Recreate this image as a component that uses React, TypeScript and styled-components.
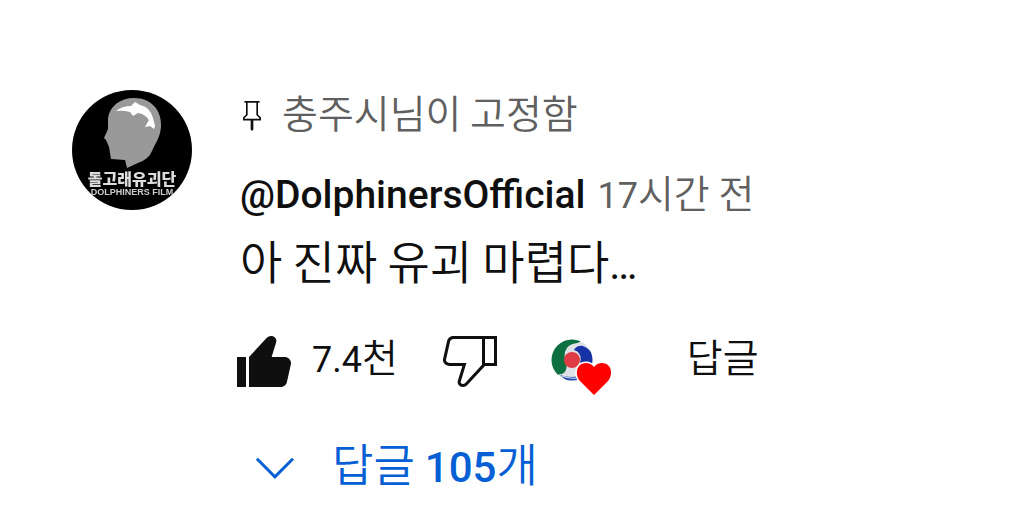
import React from "react";
import styled, { createGlobalStyle } from "styled-components";

const GlobalStyle = createGlobalStyle`
  body {
    margin: 0;
    background: #ffffff;
    color: #0f0f0f;
    font-family: Roboto, "Noto Sans CJK KR", sans-serif;
  }
`;

const Comment = styled.article`
  display: flex;
  align-items: flex-start;
  gap: 48px;
  padding: 90px 48px 24px 72px;
`;

const AvatarLink = styled.a`
  flex: none;
  display: block;
  width: 120px;
  height: 120px;
  border-radius: 50%;
  overflow: hidden;
`;

const Main = styled.div`
  flex: 1;
  min-width: 0;
`;

const Pinned = styled.div`
  display: flex;
  align-items: center;
  gap: 12px;
  height: 51px;
  margin-left: -6px;
  color: #606060;
`;

const Label = styled.span`
  font-size: 36px;
  line-height: 48px;
  white-space: nowrap;
`;

const Header = styled.div`
  display: flex;
  align-items: baseline;
  gap: 12px;
  margin-top: 26px;
  line-height: 56px;
  white-space: nowrap;
`;

const Author = styled.a`
  color: #0f0f0f;
  font-size: 39px;
  font-weight: 500;
  text-decoration: none;
`;

const Time = styled.a`
  color: #606060;
  font-size: 36px;
  text-decoration: none;
`;

const Hangul = styled.span<{ $size: number }>`
  font-family: "Noto Sans CJK KR", sans-serif;
  font-size: ${(p) => p.$size}px;
  font-weight: 350;
  line-height: 1;
`;

const Body = styled.p`
  margin: 9px 0 0;
  font-size: 42px;
  line-height: 64px;
`;

const Toolbar = styled.div`
  display: flex;
  align-items: center;
  height: 72px;
  margin: 27px 0 0 -12px;
`;

const Button = styled.button<{ $color?: string }>`
  display: flex;
  align-items: center;
  padding: 0;
  border: 0;
  background: none;
  color: ${(p) => p.$color ?? "#0f0f0f"};
  font-family: inherit;
  cursor: pointer;
`;

const LikeButton = styled(Button)`
  gap: 12px;
  margin-right: 36px;
`;

const HeartButton = styled(Button)`
  margin: 16px 73px 0 44px;
`;

const RepliesButton = styled(Button)`
  gap: 20px;
  margin-top: 36px;
  font-size: 42px;
  font-weight: 500;
  line-height: 72px;
  white-space: nowrap;
`;

const Icon = styled.svg<{ $size: number }>`
  flex: none;
  display: block;
  width: ${(p) => p.$size}px;
  height: ${(p) => p.$size}px;
  fill: currentColor;
`;

function Avatar() {
  return (
    <svg width="120" height="120" viewBox="0 0 120 120" role="img" aria-label="DolphinersOfficial">
      <defs>
        <filter id="soft"><feGaussianBlur stdDeviation="0.7" /></filter>
      </defs>
      <rect width="120" height="120" fill="#000" />
      <g filter="url(#soft)">
        <path d="M62 8C80 8 90 21 89 37C88 48 83 54 80 61Q77 69 66 73L55 78L53 70L39 69L37 57L34 50L32 48L36 39L36 28C38 16 48 8 62 8Z" fill="#999" />
        <path d="M44 21Q50 16 59 16L63 12L68 15Q78 17 81 28L83 36L82 39L78 36L73 37L77 30Q73 24 66 23L61 26L58 22Q51 20 44 21Z" fill="#fff" />
        <text x="60" y="95" textAnchor="middle" fill="#ddd" fontFamily="Noto Sans CJK KR, sans-serif" fontSize="16" fontWeight="900">돌고래유괴단</text>
        <text x="60" y="105" textAnchor="middle" fill="#ccc" fontFamily="Liberation Sans, sans-serif" fontSize="9" fontWeight="700">DOLPHINERS FILM</text>
      </g>
    </svg>
  );
}

function CreatorHeart() {
  return (
    <svg width="64" height="60" viewBox="0 0 64 60" aria-hidden="true">
      <defs>
        <clipPath id="disc"><circle cx="22" cy="22" r="20.5" /></clipPath>
        <filter id="discSoft"><feGaussianBlur stdDeviation="0.6" /></filter>
      </defs>
      <g clipPath="url(#disc)">
        <rect width="44" height="44" fill="#e0e1e6" />
        <g filter="url(#discSoft)">
          <path d="M-2 -2H30Q33 4 27 5Q17 6 15 14Q14 19 16 25Q18 33 12 36L-2 38Z" fill="#0b7040" />
          <path d="M24 12Q27 7 33 8Q41 11 46 22L44 36L29 29Q34 15 24 12Z" fill="#1730a5" />
          <path d="M10 37Q20 41 36 37L31 44H18Z" fill="#234bb0" />
          <path d="M12 38Q22 42 34 39" fill="none" stroke="#dce2f0" strokeWidth="1" />
          <circle cx="22" cy="22" r="8" fill="#df3d45" />
        </g>
      </g>
      <path d="M44 57L30 43C24 36 27 25 36 25Q41 25 44 29Q47 25 52 25C61 25 64 36 58 43Z" fill="#f00" stroke="#fff" strokeWidth="3" paintOrder="stroke" />
    </svg>
  );
}

export default function App() {
  return (
    <>
      <GlobalStyle />
      <Comment>
        <AvatarLink href="#channel"><Avatar /></AvatarLink>
        <Main>
          <Pinned>
            <Icon $size={36} viewBox="0 0 24 24" color="#0f0f0f" aria-hidden="true">
              <path d="M16 11V3.1h1V2H7v1.1h1V11l-2 2v2h5.1v6l.9 1 .9-1v-6H18v-2l-2-2zm.9 2.9H7.1v-.5l1.7-1.7.3-.3V3.1h5.8v8.3l.3.3 1.7 1.7v.5z" />
            </Icon>
            <Label><Hangul $size={39}>충주시님이 고정함</Hangul></Label>
          </Pinned>
          <Header>
            <Author href="#channel">@DolphinersOfficial</Author>
            <Time href="#comment">17<Hangul $size={39}>시간 전</Hangul></Time>
          </Header>
          <Body><Hangul $size={46}>아 진짜 유괴 마렵다</Hangul>…</Body>
          <Toolbar>
            <LikeButton aria-label="좋아요 7.4천">
              <Icon $size={72} viewBox="0 0 24 24" aria-hidden="true">
                <path d="M3 11h3v10H3V11zM18.77 11h-4.23l1.52-4.94C16.38 5.03 15.54 4 14.38 4c-.58 0-1.14.24-1.52.65L7 11v10h10.43c1.06 0 1.98-.67 2.19-1.61l1.34-6C21.23 12.15 20.18 11 18.77 11z" />
              </Icon>
              <Label>7.4<Hangul $size={39}>천</Hangul></Label>
            </LikeButton>
            <Button aria-label="싫어요">
              <Icon $size={72} viewBox="0 0 24 24" aria-hidden="true">
                <path d="M17 4h-1H6.57C5.5 4 4.59 4.67 4.38 5.61l-1.34 6C2.77 12.85 3.82 14 5.23 14h4.23l-1.52 4.94C7.62 19.97 8.46 21 9.62 21c.58 0 1.14-.24 1.52-.65L17 14h4V4h-4zm-6.6 15.67c-.19.21-.48.33-.78.33-.26 0-.5-.11-.63-.3-.07-.1-.15-.26-.09-.47l1.52-4.94.4-1.29H5.23c-.41 0-.8-.17-1.03-.46-.12-.15-.25-.4-.18-.72l1.34-6C5.46 5.35 5.97 5 6.57 5H16v8.61l-5.6 6.06zM20 13h-3V5h3v8z" />
              </Icon>
            </Button>
            <HeartButton aria-label="충주시님의 하트"><CreatorHeart /></HeartButton>
            <Button><Label><Hangul $size={39}>답글</Hangul></Label></Button>
          </Toolbar>
          <RepliesButton $color="#065fd4">
            <Icon $size={72} viewBox="0 0 24 24" aria-hidden="true">
              <path d="M18 9.28l-6.35 6.35-6.37-6.35.72-.71 5.64 5.65 5.65-5.65z" />
            </Icon>
            <span><Hangul $size={45}>답글 </Hangul>105<Hangul $size={45}>개</Hangul></span>
          </RepliesButton>
        </Main>
      </Comment>
    </>
  );
}
